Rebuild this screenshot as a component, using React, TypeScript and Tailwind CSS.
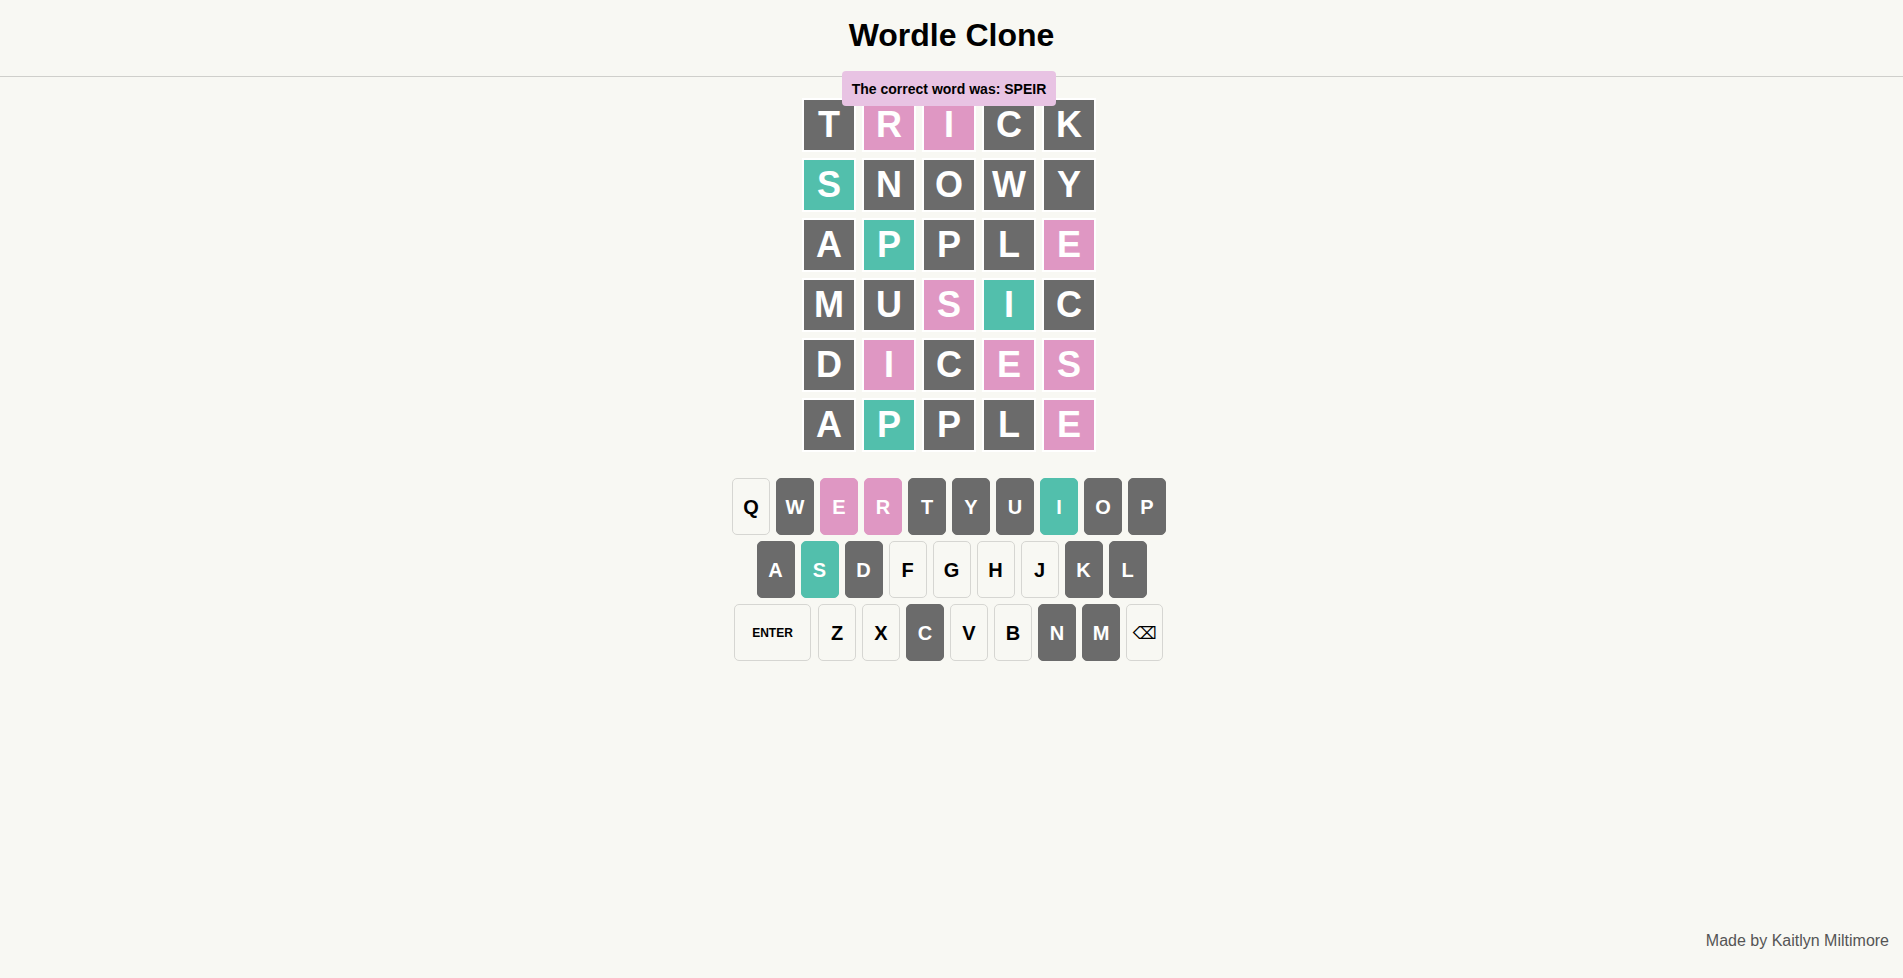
import React from "react";

type C = "g" | "p" | "t" | "n";

const board: [string, C][][] = [
  [["T", "g"], ["R", "p"], ["I", "p"], ["C", "g"], ["K", "g"]],
  [["S", "t"], ["N", "g"], ["O", "g"], ["W", "g"], ["Y", "g"]],
  [["A", "g"], ["P", "t"], ["P", "g"], ["L", "g"], ["E", "p"]],
  [["M", "g"], ["U", "g"], ["S", "p"], ["I", "t"], ["C", "g"]],
  [["D", "g"], ["I", "p"], ["C", "g"], ["E", "p"], ["S", "p"]],
  [["A", "g"], ["P", "t"], ["P", "g"], ["L", "g"], ["E", "p"]],
];

const tileBg: Record<C, string> = {
  g: "bg-[#6b6b6b]",
  p: "bg-[#df97c3]",
  t: "bg-[#52bfac]",
  n: "bg-[#f8f8f3]",
};

const keyCls: Record<C, string> = {
  g: "bg-[#6b6b6b] border-[#6b6b6b] text-white",
  p: "bg-[#df97c3] border-[#df97c3] text-white",
  t: "bg-[#52bfac] border-[#52bfac] text-white",
  n: "bg-[#f8f8f3] border-[#d6d6d2] text-black",
};

const row1: [string, C][] = [
  ["Q", "n"], ["W", "g"], ["E", "p"], ["R", "p"], ["T", "g"], ["Y", "g"], ["U", "g"], ["I", "t"], ["O", "g"], ["P", "g"],
];
const row2: [string, C][] = [
  ["A", "g"], ["S", "t"], ["D", "g"], ["F", "n"], ["G", "n"], ["H", "n"], ["J", "n"], ["K", "g"], ["L", "g"],
];
const row3: [string, C][] = [
  ["Z", "n"], ["X", "n"], ["C", "g"], ["V", "n"], ["B", "n"], ["N", "g"], ["M", "g"],
];

function Key({ k, c }: { k: string; c: C }) {
  return (
    <div
      className={`w-[38px] h-[57px] rounded-[5px] border flex items-center justify-center text-[20px] font-bold ${keyCls[c]}`}
    >
      {k}
    </div>
  );
}

export default function App() {
  return (
    <div className="min-h-screen flex flex-col bg-[#f8f8f3] text-black font-['Liberation_Sans',Arial,sans-serif]">
      <header className="h-[77px] border-b border-[#cfcfcb] flex justify-center">
        <h1 className="pt-[17px] text-[32px] leading-[37px] font-bold">Wordle Clone</h1>
      </header>

      <main className="relative flex flex-col items-center pr-[5px]">
        <div className="absolute top-[-6px] z-10 rounded-[4px] bg-[#e8c3e3] px-[10px] pt-[10px] pb-[8px] text-[14px] leading-[17px] font-bold text-black">
          The correct word was: SPEIR
        </div>

        <div className="mt-[21px] flex flex-col gap-[6px]">
          {board.map((row, i) => (
            <div key={i} className="flex gap-[6px]">
              {row.map(([l, c], j) => (
                <div
                  key={j}
                  className={`w-[54px] h-[54px] border-2 border-white flex items-center justify-center text-white text-[36px] font-bold ${tileBg[c]}`}
                >
                  {l}
                </div>
              ))}
            </div>
          ))}
        </div>

        <div className="mt-[26px] flex flex-col items-center gap-[6px]">
          <div className="flex gap-[6px]">
            {row1.map(([k, c]) => (
              <Key key={k} k={k} c={c} />
            ))}
          </div>
          <div className="flex gap-[6px] pl-[5px]">
            {row2.map(([k, c]) => (
              <Key key={k} k={k} c={c} />
            ))}
          </div>
          <div className="flex gap-[6px] pr-[1px]">
            <div className="w-[77px] h-[57px] rounded-[5px] border border-[#d6d6d2] bg-[#f8f8f3] flex items-center justify-center text-[12px] font-bold">
              ENTER
            </div>
            <div className="flex gap-[6px] ml-[1px]">
              {row3.map(([k, c]) => (
                <Key key={k} k={k} c={c} />
              ))}
            </div>
            <div className="w-[37px] h-[57px] rounded-[5px] border border-[#d6d6d2] bg-[#f8f8f3] flex items-center justify-center pt-[2px] text-[17px] font-['DejaVu_Sans',sans-serif]">
              ⌫
            </div>
          </div>
        </div>
      </main>

      <footer className="mt-auto flex justify-end pr-[14px] pb-[28px]">
        <span className="text-[16px] leading-[18px] text-[#555555]">Made by Kaitlyn Miltimore</span>
      </footer>
    </div>
  );
}
